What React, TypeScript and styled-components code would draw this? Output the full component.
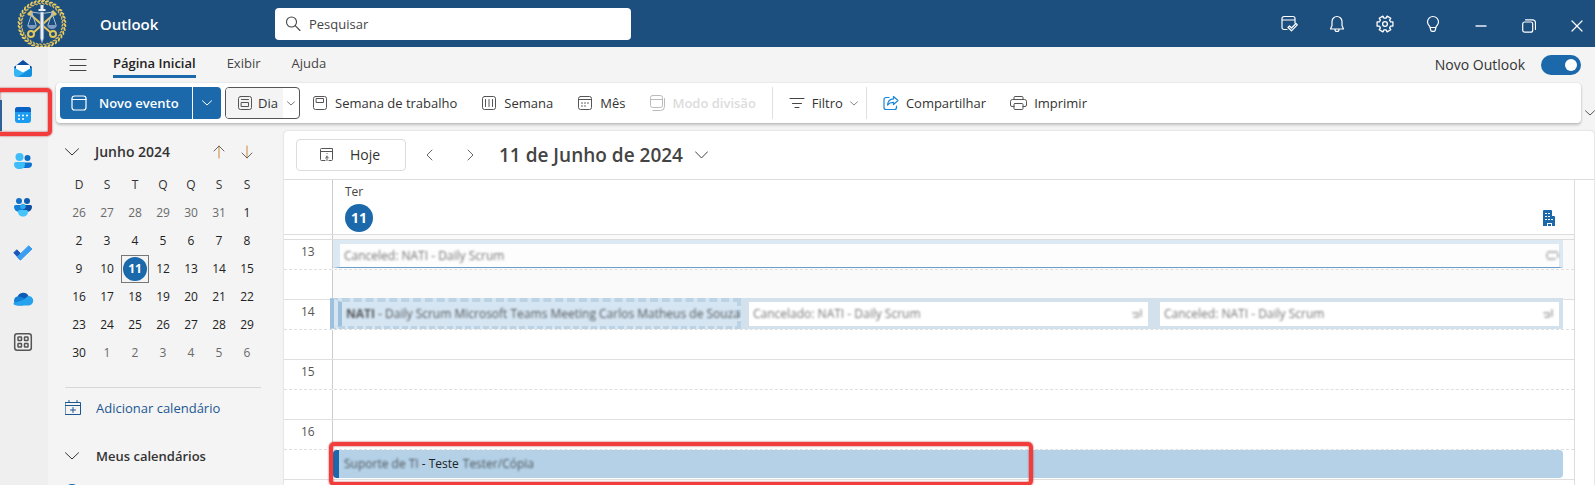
import React from 'react';
import styled, { createGlobalStyle, css } from 'styled-components';

const GlobalStyle = createGlobalStyle`
  *, *::before, *::after { box-sizing: border-box; }
  html, body { margin: 0; height: 100%; overflow: hidden; }
  body {
    background: #f4f4f4;
    color: #333;
    font-family: "Open Sans", "Noto Sans", sans-serif;
    font-size: 13px;
    line-height: 20px;
  }
  button, input { font: inherit; color: inherit; }
  button { border: 0; background: none; padding: 0; cursor: pointer; }
  a { color: inherit; text-decoration: none; }
  svg { display: block; flex: none; }
`;

const Shell = styled.div`
  display: flex;
  flex-direction: column;
  height: 100vh;
`;

const row = css`
  display: flex;
  align-items: center;
`;

/* ---------- title bar ---------- */

const TitleBar = styled.header`
  ${row}
  flex: none;
  height: 47px;
  padding-left: 17px;
  background: #1c4e7e;
  color: #fff;
  overflow: hidden;
`;

const Brand = styled.span`
  width: 175px;
  margin-left: 33px;
  font-size: 15px;
  font-weight: 600;
`;

const Search = styled.label`
  ${row}
  gap: 8px;
  flex: 0 1 356px;
  height: 32px;
  padding: 0 10px;
  border-radius: 4px;
  background: #fff;
  color: #444;
`;

const SearchInput = styled.input`
  flex: 1;
  min-width: 0;
  padding: 0;
  border: 0;
  outline: 0;
  background: none;
  &::placeholder { color: #444; opacity: 1; }
`;

const TitleActions = styled.div`
  ${row}
  margin-left: auto;
  margin-right: -6px;
`;

const TitleButton = styled.button<{ $window?: boolean }>`
  ${row}
  justify-content: center;
  width: 48px;
  height: 47px;
  padding-top: ${(p) => (p.$window ? 4 : 0)}px;
`;

/* ---------- body ---------- */

const Body = styled.div`
  display: flex;
  flex: 1;
  min-height: 0;
`;

const Rail = styled.nav`
  display: flex;
  flex-direction: column;
  gap: 4px;
  flex: none;
  width: 48px;
  padding-top: 1px;
  background: #efefef;
`;

const RailItem = styled.button<{ $active?: boolean; $short?: boolean }>`
  ${row}
  position: relative;
  z-index: ${(p) => (p.$active ? 2 : 'auto')};
  height: ${(p) => (p.$short ? 36 : 42)}px;
  padding-left: 12px;
  ${(p) =>
    p.$active &&
    css`
      &::before {
        content: '';
        position: absolute;
        left: 0;
        top: 6px;
        width: 2px;
        height: 31px;
        background: #1b69ab;
      }
    `}
`;

const Highlight = styled.span`
  position: absolute;
  border: 4px solid #f33c3c;
  border-radius: 5px;
  box-shadow: 0 0 2px #a33, inset 0 0 2px #a33;
  pointer-events: none;
`;

const RailHighlight = styled(Highlight)`
  top: -6px;
  left: -4px;
  width: 56px;
  height: 48px;
`;

const Workspace = styled.div`
  display: flex;
  flex-direction: column;
  flex: 1;
  min-width: 0;
`;

const TabBar = styled.div`
  ${row}
  flex: none;
  height: 36px;
  padding: 0 14px 0 21px;
`;

const Tabs = styled.nav`
  display: flex;
  gap: 31px;
  margin-left: 26px;
`;

const Tab = styled.a<{ $active?: boolean }>`
  height: 26px;
  padding-top: 1px;
  border-bottom: 3px solid ${(p) => (p.$active ? '#1b69ab' : 'transparent')};
  font-weight: ${(p) => (p.$active ? 600 : 400)};
  color: ${(p) => (p.$active ? '#222' : '#444')};
`;

const SwitchLabel = styled.label`
  ${row}
  gap: 16px;
  margin-left: auto;
  font-size: 14px;
`;

const Switch = styled.input`
  appearance: none;
  ${row}
  justify-content: flex-end;
  width: 40px;
  height: 20px;
  margin: 0;
  padding: 4px;
  border-radius: 10px;
  background: #1b69ab;
  &::before {
    content: '';
    width: 12px;
    height: 12px;
    border-radius: 50%;
    background: #fff;
  }
`;

const RibbonRow = styled.div`
  display: flex;
  flex: none;
  align-items: flex-end;
  padding-left: 8px;
  margin-right: -4px;
`;

const Ribbon = styled.div`
  ${row}
  flex: 1;
  height: 40px;
  padding: 0 4px;
  border-radius: 4px;
  background: #fff;
  box-shadow: 0 0 2px #0002, 0 2px 3px #0003;
`;

const RibbonMore = styled.button`
  width: 18px;
  height: 20px;
  padding-left: 4px;
`;

const NewEvent = styled.button`
  ${row}
  gap: 12px;
  height: 32px;
  width: 132px;
  padding-left: 11px;
  border-radius: 4px 0 0 4px;
  background: #1b69ab;
  color: #fff;
  font-weight: 600;
`;

const NewEventMore = styled.button`
  ${row}
  justify-content: center;
  width: 28px;
  height: 32px;
  margin-left: 1px;
  border-radius: 0 4px 4px 0;
  background: #1b69ab;
  color: #fff;
`;

const DaySplit = styled.div`
  display: flex;
  width: 75px;
  height: 32px;
  margin-left: 4px;
  border: 1px solid #555;
  border-radius: 4px;
  overflow: hidden;
`;

const DayButton = styled.button`
  ${row}
  gap: 5px;
  flex: 1;
  padding-left: 11px;
  background: #f4f4f4;
`;

const DayMore = styled.button`
  ${row}
  justify-content: center;
  width: 16px;
  color: #777;
`;

const RibbonButton = styled.button<{ $menu?: boolean }>`
  ${row}
  gap: 7px;
  height: 32px;
  padding: 0 ${(p) => (p.$menu ? 4 : 12)}px 0 12px;
  white-space: nowrap;
  &:disabled { color: #dcdcdc; font-weight: 600; cursor: default; }
`;

const RibbonDivider = styled.span`
  width: 1px;
  height: 32px;
  margin: 0 4px;
  background: #e0e0e0;
`;

const Content = styled.div`
  display: flex;
  flex: 1;
  min-height: 0;
  margin-top: 8px;
`;

/* ---------- side panel ---------- */

const Side = styled.aside`
  flex: none;
  width: 236px;
  padding: 7px 23px 0 17px;
  overflow: hidden;
`;

const SideHead = styled.div`
  ${row}
  height: 28px;
`;

const SideTitle = styled.h2`
  flex: 1;
  margin: 0 0 0 16px;
  font-size: 14px;
  line-height: 20px;
  font-weight: 600;
`;

const ArrowButton = styled.button`
  ${row}
  justify-content: center;
  width: 28px;
  height: 28px;
`;

const Month = styled.table`
  border-collapse: collapse;
  table-layout: fixed;
  width: 196px;
  margin-top: 5px;
  font-size: 12px;
  text-align: center;
`;

const WeekDay = styled.th`
  height: 28px;
  padding: 0;
  font-weight: 400;
`;

const DayCell = styled.td<{ $out?: boolean; $today?: boolean }>`
  height: 28px;
  padding: 0;
  color: ${(p) => (p.$out ? '#6a6a6a' : '#222')};
  ${(p) => p.$today && css`outline: 1px solid #777; outline-offset: -1px;`}
`;

const Today = styled.span<{ $size: number }>`
  display: flex;
  align-items: center;
  justify-content: center;
  width: ${(p) => p.$size}px;
  height: ${(p) => p.$size}px;
  border-radius: 50%;
  background: #1b69ab;
  color: #fff;
  font-weight: 700;
`;

const TodayCenter = styled.div`
  display: flex;
  justify-content: center;
`;

const AddCalendar = styled.button`
  ${row}
  gap: 15px;
  width: 196px;
  height: 40px;
  margin-top: 20px;
  border-top: 1px solid #d8d8d8;
  color: #1b5792;
`;

const CalendarGroup = styled.button`
  ${row}
  gap: 17px;
  height: 32px;
  margin-top: 13px;
  font-weight: 600;
`;

const CalendarDot = styled.span`
  display: block;
  width: 16px;
  height: 16px;
  margin: 12px 0 0 -1px;
  border-radius: 50%;
  background: #1b69ab;
`;

/* ---------- day view ---------- */

const DayView = styled.main`
  display: flex;
  flex-direction: column;
  flex: 1;
  min-width: 0;
  margin-right: 1px;
  border-radius: 4px 4px 0 0;
  background: #fff;
  box-shadow: 0 0 2px #0003;
  overflow: hidden;
`;

const DayToolbar = styled.div`
  ${row}
  flex: none;
  height: 49px;
  padding-left: 12px;
  border-bottom: 1px solid #ddd;
`;

const TodayButton = styled.button`
  ${row}
  gap: 15px;
  width: 110px;
  height: 32px;
  margin-right: 3px;
  padding-left: 22px;
  border: 1px solid #dcdcdc;
  border-radius: 4px;
  font-size: 14px;
`;

const NavButton = styled.button`
  ${row}
  justify-content: center;
  width: 41px;
  height: 32px;
`;

const DateButton = styled.button`
  ${row}
  gap: 12px;
  margin-left: 8px;
  font-size: 19px;
  line-height: 28px;
  font-weight: 600;
  color: #444;
`;

const Schedule = styled.div`
  display: flex;
  flex-direction: column;
  flex: 1;
  min-height: 0;
  margin-right: 19px;
  border-right: 1px solid #ddd;
  overflow: hidden;
`;

const gridColumns = css`
  display: grid;
  flex: none;
  grid-template-columns: 49px minmax(0, 1fr);
`;

const DayHeader = styled.div`
  ${gridColumns}
  height: 55px;
  border-bottom: 1px solid #ddd;
`;

const AllDay = styled.div`
  ${gridColumns}
  height: 5px;
  border-bottom: 1px solid #ddd;
`;

const Rest = styled.div`
  ${gridColumns}
  flex: 1;
`;

const Gutter = styled.div`
  padding: 2px 0 0 17px;
  border-right: 1px solid #ccc;
  font-size: 12px;
  color: #555;
`;

const DayName = styled.div`
  display: flex;
  align-items: flex-end;
  justify-content: space-between;
  padding: 2px 18px 2px 12px;
`;

const DayLabel = styled.div`
  display: flex;
  flex-direction: column;
  gap: 2px;
  font-size: 12px;
  color: #444;
`;

const DayNumber = styled.span`
  font-size: 14px;
`;

const Building = styled.span`
  padding-bottom: 6px;
`;

const HalfHour = styled.div<{ $half?: boolean }>`
  ${gridColumns}
  height: 30px;
  border-bottom: 1px ${(p) => (p.$half ? 'solid' : 'dashed')} #dfdfdf;
`;

const Slot = styled.div<{ $off?: boolean }>`
  display: flex;
  position: relative;
  padding-right: 11px;
  background: ${(p) => (p.$off ? '#fafafa' : '#fff')};
`;

const Event = styled.div<{ $kind: 'free' | 'tentative' | 'cancelled' | 'busy' }>`
  ${row}
  flex: 1;
  min-width: 0;
  height: 28px;
  padding: 0 8px 0 4px;
  font-size: 12px;
  line-height: 16px;
  white-space: nowrap;
  ${(p) => p.$kind === 'free' && css`
    border: 4px solid #dce8f2;
    border-left-width: 7px;
    border-bottom: 1px solid #6b9dca;
    background: #fdfdfd;
    padding-right: 0;
  `}
  ${(p) => p.$kind === 'cancelled' && css`
    height: 31px;
    margin-top: -2px;
    border: solid #d3e1ec;
    border-width: 4px 4px 3px 8px;
    background: #fff;
    padding-right: 4px;
  `}
  ${(p) => p.$kind === 'tentative' && css`
    height: 31px;
    margin: -2px 0 0 -3px;
    border: 4px dashed #bcd3e6;
    border-left: 12px double #9dc0dd;
    border-bottom-width: 3px;
    background: #d5e5f2;
    padding-right: 0;
  `}
  ${(p) => p.$kind === 'busy' && css`
    border-left: 6px solid #1b69ab;
    border-radius: 4px;
    background: #b4d1e7;
    padding-left: 5px;
    color: #222;
  `}
`;

const Redacted = styled.span<{ $soft?: boolean }>`
  color: ${(p) => (p.$soft ? '#555' : '#333')};
  filter: blur(1px);
  opacity: 0.8;
`;

const EventIcon = styled.span`
  margin-left: auto;
  color: #bbb;
  filter: blur(1px);
`;

const EventHighlight = styled(Highlight)`
  z-index: 2;
  top: -8px;
  left: -4px;
  width: calc(57% - 3px);
  height: 44px;
`;

const EventText = styled.span`
  padding: 0 4px 0 3px;
`;

/* ---------- icons ---------- */

type IconProps = { size?: number; w?: number; h?: number; stroke?: number; color?: string; children: React.ReactNode };
const Icon = ({ size = 16, w = size, h = size, stroke = 1, color = 'currentColor', children }: IconProps) => (
  <svg width={w} height={h} viewBox={`0 0 ${w} ${h}`} fill="none" stroke={color} strokeWidth={stroke} strokeLinecap="round" strokeLinejoin="round" aria-hidden="true">
    {children}
  </svg>
);

const Chevron = ({ w = 13, color }: { w?: number; color?: string }) => {
  const h = Math.ceil(w / 2) + 1;
  return (
    <Icon w={w} h={h} color={color}>
      <path d={`M.5 .8 L${w / 2} ${h - 1} L${w - 0.5} .8`} />
    </Icon>
  );
};

const laurel = Array.from({ length: 36 }, (_, i) => i * 10);

const Crest = () => (
  <svg width="50" height="50" viewBox="-25 -25 50 50" fill="none" aria-hidden="true">
    {laurel.map((a) => (
      <g key={a} transform={`rotate(${a})`} fill="#e6cb62">
        <ellipse cx="1" cy="-23" rx="2.2" ry="1" transform="rotate(-28 1 -23)" />
        <ellipse cx="1" cy="-20.6" rx="2" ry=".8" transform="rotate(28 1 -20.6)" fill="#d0b560" />
      </g>
    ))}
    <g stroke="#e3c55b" strokeWidth="2">
      <path d="M-12 -10L9 9M12 -10L-9 9" />
      <circle cx="-11" cy="10" r="3" />
      <circle cx="11" cy="10" r="3" />
      <path d="M-14 -9l4-4M14 -9l-4-4" strokeWidth="3" />
    </g>
    <g stroke="#a9bfd8" strokeWidth="1">
      <path d="M-11 -12Q0 -9 11 -12M-10 -11l-4 12M-10 -11l4 12M10 -11l-4 12M10 -11l4 12" />
    </g>
    <path d="M-15 1h10q-1 4-5 4t-5-4zM5 1h10q-1 4-5 4t-5-4z" fill="#7e9cc0" />
    <path d="M-1.700 -12h3.400V14L0 19l-1.700-5z" fill="#e9eef5" stroke="#7f95b0" strokeWidth=".6" />
    <path d="M-3.500 -13h7v-2h-2v-4h-3v4h-2z" fill="#e9eef5" />
  </svg>
);

const MailIcon = () => (
  <svg width="22" height="20" viewBox="0 0 22 20" aria-hidden="true">
    <path d="M2 8L11 1l9 7v6H2z" fill="#0f4fa3" />
    <rect x="4" y="6" width="14" height="9" rx="1" fill="#fff" />
    <path d="M2 8.500l9 5 9-5V15a3 3 0 0 1-3 3H5a3 3 0 0 1-3-3z" fill="#35b5f3" />
    <path d="M20 8.500L6 18h11a3 3 0 0 0 3-3z" fill="#1590e0" />
  </svg>
);

const CalendarAppIcon = () => (
  <svg width="22" height="20" viewBox="0 0 22 20" aria-hidden="true">
    <rect x="3" y="2" width="16" height="16" rx="3" fill="#1b9cf0" />
    <path d="M3 7V5a3 3 0 0 1 3-3h10a3 3 0 0 1 3 3v2z" fill="#0a63c4" />
    <g fill="#fff">
      <circle cx="7" cy="10.500" r="1" /><circle cx="11" cy="10.500" r="1" /><circle cx="15" cy="10.500" r="1" />
      <circle cx="7" cy="14" r="1" /><circle cx="11" cy="14" r="1" />
    </g>
  </svg>
);

const PeopleIcon = () => (
  <svg width="22" height="20" viewBox="0 0 22 20" aria-hidden="true">
    <circle cx="15.500" cy="7" r="3" fill="#0f6cc4" />
    <path d="M11 11.500h7.500a1.500 1.500 0 0 1 1.500 1.500c0 3-2 4-4.500 4H11z" fill="#0f74cf" />
    <circle cx="7.500" cy="6" r="4" fill="#3fbdf8" />
    <path d="M4 11h7a2 2 0 0 1 2 2c0 4-2.500 5-5.500 5S2 17 2 13a2 2 0 0 1 2-2z" fill="#3fbdf8" />
  </svg>
);

const GroupsIcon = () => (
  <svg width="22" height="20" viewBox="0 0 22 20" aria-hidden="true">
    <circle cx="7" cy="4" r="3" fill="#1271c9" />
    <circle cx="15" cy="4" r="3" fill="#0f5cb0" />
    <path d="M3.500 8H11v7H7.500C4 15 2 12.500 2 9.500A1.500 1.500 0 0 1 3.500 8z" fill="#1480d8" />
    <path d="M18.500 8H11v7h3.500C18 15 20 12.500 20 9.500A1.500 1.500 0 0 0 18.500 8z" fill="#0d4fa0" />
    <circle cx="11" cy="9.500" r="2.700" fill="#2ea9ef" />
    <path d="M7.500 13h7a1.500 1.500 0 0 1 1.500 1.500c0 3-2 5-5 5s-5-2-5-5A1.500 1.500 0 0 1 7.500 13z" fill="#45c4fa" />
  </svg>
);

const TodoIcon = () => (
  <svg width="22" height="20" viewBox="0 0 22 20" aria-hidden="true">
    <path d="M1.800 9.800l3-3 5.200 5.200-1.500 5z" fill="#1a58b8" stroke="#1a58b8" strokeLinejoin="round" />
    <path d="M8.500 17l-3.200-3.200L16.800 2.800 20 6z" fill="#3b9df0" stroke="#3b9df0" strokeLinejoin="round" />
  </svg>
);

const CloudIcon = () => (
  <svg width="22" height="20" viewBox="0 0 22 20" aria-hidden="true">
    <path d="M5.500 8a6 6 0 0 1 11-1l-6 6z" fill="#0a5bb5" />
    <path d="M5.500 7.500a4.600 4.600 0 0 0 .3 9H11l4-5C12 9 9 7.300 5.500 7.500z" fill="#1380d8" />
    <path d="M16.300 7a4.700 4.700 0 0 1 .4 9.500H5c-2 0-3.300-1-3.700-2.300L11 11z" fill="#27a3ee" />
  </svg>
);

const AppsIcon = () => (
  <Icon w={22} h={20} stroke={1.5} color="#555">
    <rect x="2.700" y="1.700" width="16.600" height="16.600" rx="2.500" />
    <rect x="6" y="5" width="3.500" height="3.500" rx=".5" /><rect x="12.500" y="5" width="3.500" height="3.500" rx=".5" />
    <rect x="6" y="11.500" width="3.500" height="3.500" rx=".5" /><rect x="12.500" y="11.500" width="3.500" height="3.500" rx=".5" />
  </Icon>
);

const ShareIcon = () => (
  <Icon color="#1a86d9" stroke={1.2}>
    <path d="M6 2.500H3a2 2 0 0 0-2 2V12.500a2 2 0 0 0 2 2h8.500a2 2 0 0 0 2-2V11" />
    <path d="M10.500 1.500L15 5.500l-4.500 4V7.300C7.500 7.200 6 8.200 4.500 10c.3-3.500 2.500-6 6-6.200z" />
  </Icon>
);

const PrinterIcon = () => (
  <Icon w={17} h={16} color="#555">
    <path d="M4 4.500v-2a1 1 0 0 1 1-1h7a1 1 0 0 1 1 1v2M4 11.500H2a1.500 1.500 0 0 1-1.500-1.500V6.500a2 2 0 0 1 2-2h12a2 2 0 0 1 2 2V10a1.500 1.500 0 0 1-1.500 1.500h-2" />
    <rect x="4" y="8.500" width="9" height="6" rx="1" />
  </Icon>
);

/* Six teeth, each a pair of outer points between two inner ones. */
const gearTooth = [[-20, 6], [-15, 8.2], [15, 8.2], [20, 6]];
const gearOutline = Array.from({ length: 6 }, (_, i) =>
  gearTooth
    .map(([angle, radius]) => {
      const t = ((i * 60 + 30 + angle) * Math.PI) / 180;
      return `${(9 + radius * Math.sin(t)).toFixed(2)} ${(9 - radius * Math.cos(t)).toFixed(2)}`;
    })
    .join('L'),
).join('L');

const GearIcon = () => (
  <Icon size={18} stroke={1.3}>
    <path d={`M${gearOutline}Z`} />
    <circle cx="9" cy="9" r="2.400" />
  </Icon>
);

const BuildingIcon = () => (
  <svg width="13" height="16" viewBox="0 0 13 16" aria-hidden="true">
    <path d="M0 1a1 1 0 0 1 1-1h7a1 1 0 0 1 1 1v5h2a1 1 0 0 1 1 1v9H9v-3H4v3H0z" fill="#1b69ab" />
    <path d="M5 14h3v2H5z" fill="#1b69ab" />
    <g fill="#fff">
      {[3, 6, 9].map((y) => <React.Fragment key={y}><rect x="2" y={y} width="2" height="1" /><rect x="5" y={y} width="2" height="1" /></React.Fragment>)}
      <rect x="8" y="9" width="2" height="1" />
    </g>
  </svg>
);

/* ---------- data ---------- */

const weekDays = ['D', 'S', 'T', 'Q', 'Q', 'S', 'S'];
const firstDay = new Date(2024, 4, 26);
const weeks = Array.from({ length: 6 }, (_, w) =>
  Array.from({ length: 7 }, (_, d) => {
    const date = new Date(firstDay);
    date.setDate(firstDay.getDate() + w * 7 + d);
    return { day: date.getDate(), out: date.getMonth() !== 5 };
  }),
);

const slotEvents: Record<string, React.ReactNode> = {
  '13:00': (
    <Event $kind="free">
      <Redacted $soft>Canceled: NATI - Daily Scrum</Redacted>
      <EventIcon><Icon size={13} stroke={2}><path d="M2 3h9M2 10h7M1 5v3M12 5v3" /></Icon></EventIcon>
    </Event>
  ),
  '14:00': (
    <>
      <Event $kind="tentative">
        <Redacted>
          <b>NATI</b> - Daily Scrum Microsoft Teams Meeting Carlos Matheus de Souza
        </Redacted>
      </Event>
      <Event $kind="cancelled">
        <Redacted $soft>Cancelado: NATI - Daily Scrum</Redacted>
        <EventIcon><Icon size={13} stroke={2}><path d="M2 5h5v4H3M10 2v6" /></Icon></EventIcon>
      </Event>
      <Event $kind="cancelled">
        <Redacted $soft>Canceled: NATI - Daily Scrum</Redacted>
        <EventIcon><Icon size={13} stroke={2}><path d="M2 5h5v4H3M10 2v6" /></Icon></EventIcon>
      </Event>
    </>
  ),
  '16:30': (
    <>
      <Event $kind="busy">
        <Redacted>Suporte de TI</Redacted>
        <EventText>- Teste</EventText>
        <Redacted>Tester/Cópia</Redacted>
      </Event>
      <EventHighlight />
    </>
  ),
};

const hours = [13, 14, 15, 16];

export default function App() {
  return (
    <Shell>
      <GlobalStyle />
      <TitleBar>
        <Crest />
        <Brand>Outlook</Brand>
        <Search>
          <Icon size={16} stroke={1.1}><circle cx="6.500" cy="6" r="5" /><path d="M10.200 9.700L15 14.500" /></Icon>
          <SearchInput type="search" placeholder="Pesquisar" aria-label="Pesquisar" />
        </Search>
        <TitleActions>
          <TitleButton aria-label="Meu dia">
            <Icon size={18} stroke={1.2}><path d="M7 14.500H4a2 2 0 0 1-2-2V3.500a2 2 0 0 1 2-2h9a2 2 0 0 1 2 2V8M2 5h13M8 12.500l1.500-1.500 2 2 4.500-4.500 1.300 1.300-5.800 6z" /></Icon>
          </TitleButton>
          <TitleButton aria-label="Notificações">
            <Icon size={18} stroke={1.2}><path d="M9 1.500a5 5 0 0 0-5 5v4L2.500 14h13L14 10.500v-4a5 5 0 0 0-5-5zM7 14.500a2 2 0 0 0 4 0" /></Icon>
          </TitleButton>
          <TitleButton aria-label="Configurações"><GearIcon /></TitleButton>
          <TitleButton aria-label="Dicas">
            <Icon size={18} stroke={1.2}><path d="M9 1.500a5.500 5.500 0 0 0-5.500 5.500c0 2.200 1.500 3.500 2.500 5l.7 3.200a1.500 1.500 0 0 0 1.400 1.200h1.800a1.500 1.500 0 0 0 1.400-1.200L12 12c1-1.500 2.500-2.800 2.500-5A5.500 5.500 0 0 0 9 1.500zM6 12.500h6" /></Icon>
          </TitleButton>
          <TitleButton $window aria-label="Minimizar"><Icon size={14} stroke={2} color="#b4c5dc"><path d="M1.500 7h11" strokeLinecap="butt" /></Icon></TitleButton>
          <TitleButton $window aria-label="Restaurar">
            <Icon size={14} stroke={1.2}><rect x=".7" y="3" width="10" height="10.200" rx="2" /><path d="M3.500 .8H10.500a3 3 0 0 1 3 3V10.500" /></Icon>
          </TitleButton>
          <TitleButton $window aria-label="Fechar"><Icon size={12} stroke={1.2}><path d="M1 1l10 10M11 1L1 11" /></Icon></TitleButton>
        </TitleActions>
      </TitleBar>

      <Body>
        <Rail>
          <RailItem aria-label="Email"><MailIcon /></RailItem>
          <RailItem $active aria-label="Calendário"><CalendarAppIcon /><RailHighlight /></RailItem>
          <RailItem aria-label="Pessoas"><PeopleIcon /></RailItem>
          <RailItem aria-label="Grupos"><GroupsIcon /></RailItem>
          <RailItem aria-label="Tarefas"><TodoIcon /></RailItem>
          <RailItem aria-label="OneDrive"><CloudIcon /></RailItem>
          <RailItem $short aria-label="Mais aplicativos"><AppsIcon /></RailItem>
        </Rail>

        <Workspace>
          <TabBar>
            <button aria-label="Menu"><Icon w={18} h={14} color="#444"><path d="M1 1.500h16M1 7.500h16M1 12.500h16" /></Icon></button>
            <Tabs>
              <Tab href="#inicio" $active>Página Inicial</Tab>
              <Tab href="#exibir">Exibir</Tab>
              <Tab href="#ajuda">Ajuda</Tab>
            </Tabs>
            <SwitchLabel>Novo Outlook<Switch type="checkbox" defaultChecked /></SwitchLabel>
          </TabBar>

          <RibbonRow>
            <Ribbon>
              <NewEvent><Icon stroke={1.2}><rect x="1" y="1" width="14" height="14" rx="2.500" /><path d="M1 4.500h14" /></Icon>Novo evento</NewEvent>
              <NewEventMore aria-label="Mais opções de evento"><Chevron w={10} /></NewEventMore>
              <DaySplit>
                <DayButton><Icon color="#555"><rect x="1.500" y="1.500" width="13" height="13" rx="2" /><path d="M4.500 4.500h7" /><rect x="4.500" y="7.500" width="7" height="4" /></Icon>Dia</DayButton>
                <DayMore aria-label="Opções de dia"><Chevron w={8} /></DayMore>
              </DaySplit>
              <RibbonButton><Icon color="#555"><rect x="1.500" y="1.500" width="13" height="13" rx="2" /><rect x="4.500" y="3.500" width="7" height="4" /></Icon>Semana de trabalho</RibbonButton>
              <RibbonButton><Icon color="#555"><rect x="1.500" y="1.500" width="13" height="13" rx="2" /><path d="M4.500 4.500v7M8 4.500v7M11.500 4.500v7" /></Icon>Semana</RibbonButton>
              <RibbonButton><Icon color="#555"><rect x="1.500" y="1.500" width="13" height="13" rx="2" /><path d="M1.500 4.500h13M4.500 8h1M7.500 8h1M10.500 8h1M4.500 11h1M7.500 11h1" /></Icon>Mês</RibbonButton>
              <RibbonButton disabled><Icon color="#bbb"><rect x="1.500" y=".5" width="12" height="12" rx="2" /><path d="M1.500 4.500h12M4 15.500h7.500a4 4 0 0 0 4-4V3.500" /></Icon>Modo divisão</RibbonButton>
              <RibbonDivider />
              <RibbonButton $menu><Icon color="#444"><path d="M1 3.500h14M3.500 8.500h9M6 12.500h4" /></Icon>Filtro<Chevron w={8} color="#888" /></RibbonButton>
              <RibbonDivider />
              <RibbonButton><ShareIcon />Compartilhar</RibbonButton>
              <RibbonButton><PrinterIcon />Imprimir</RibbonButton>
            </Ribbon>
            <RibbonMore aria-label="Recolher faixa"><Chevron w={10} color="#555" /></RibbonMore>
          </RibbonRow>

          <Content>
            <Side>
              <SideHead>
                <Chevron w={14} />
                <SideTitle>Junho 2024</SideTitle>
                <ArrowButton aria-label="Mês anterior"><Icon w={12} h={14}><path d="M6 1v12" stroke="#c98a35" /><path d="M1 6l5-5 5 5" stroke="#666" /></Icon></ArrowButton>
                <ArrowButton aria-label="Próximo mês"><Icon w={12} h={14}><path d="M6 1v12" stroke="#c98a35" /><path d="M1 8l5 5 5-5" stroke="#666" /></Icon></ArrowButton>
              </SideHead>
              <Month>
                <thead><tr>{weekDays.map((d, i) => <WeekDay key={i}>{d}</WeekDay>)}</tr></thead>
                <tbody>
                  {weeks.map((week, i) => (
                    <tr key={i}>
                      {week.map(({ day, out }) => {
                        const today = day === 11 && !out;
                        return (
                          <DayCell key={day} $out={out} $today={today}>
                            {today ? <TodayCenter><Today $size={24}>{day}</Today></TodayCenter> : day}
                          </DayCell>
                        );
                      })}
                    </tr>
                  ))}
                </tbody>
              </Month>
              <AddCalendar>
                <Icon><path d="M.5 2.500h15v12H.5zM.5 5.500h15M4 .5v2M12 .5v2M8 7.500v5M5.500 10h5" strokeLinejoin="miter" /></Icon>
                Adicionar calendário
              </AddCalendar>
              <CalendarGroup><Chevron w={14} />Meus calendários</CalendarGroup>
              <CalendarDot />
            </Side>

            <DayView>
              <DayToolbar>
                <TodayButton><Icon color="#555"><path d="M6 13.500H2.500a1 1 0 0 1-1-1v-10a1 1 0 0 1 1-1h11v11a1 1 0 0 1-1 1H10M1.500 4.500h12M8 6.500h.1M8 9v4.500M6.500 11L8 9.500 9.500 11" /></Icon>Hoje</TodayButton>
                <NavButton aria-label="Dia anterior"><Icon w={7} h={12} color="#666"><path d="M6 1L1 6l5 5" /></Icon></NavButton>
                <NavButton aria-label="Próximo dia"><Icon w={7} h={12} color="#666"><path d="M1 1l5 5-5 5" /></Icon></NavButton>
                <DateButton>11 de Junho de 2024<Chevron w={13} /></DateButton>
              </DayToolbar>
              <Schedule>
                <DayHeader>
                  <Gutter />
                  <DayName>
                    <DayLabel>Ter<Today $size={28}><DayNumber>11</DayNumber></Today></DayLabel>
                    <Building><BuildingIcon /></Building>
                  </DayName>
                </DayHeader>
                <AllDay><Gutter /><Slot $off /></AllDay>
                {hours.map((h) => (
                  <React.Fragment key={h}>
                    <HalfHour><Gutter>{h}</Gutter><Slot $off={h === 13}>{slotEvents[`${h}:00`]}</Slot></HalfHour>
                    <HalfHour $half><Gutter /><Slot $off={h === 13}>{slotEvents[`${h}:30`]}</Slot></HalfHour>
                  </React.Fragment>
                ))}
                <Rest><Gutter /><Slot /></Rest>
              </Schedule>
            </DayView>
          </Content>
        </Workspace>
      </Body>
    </Shell>
  );
}
